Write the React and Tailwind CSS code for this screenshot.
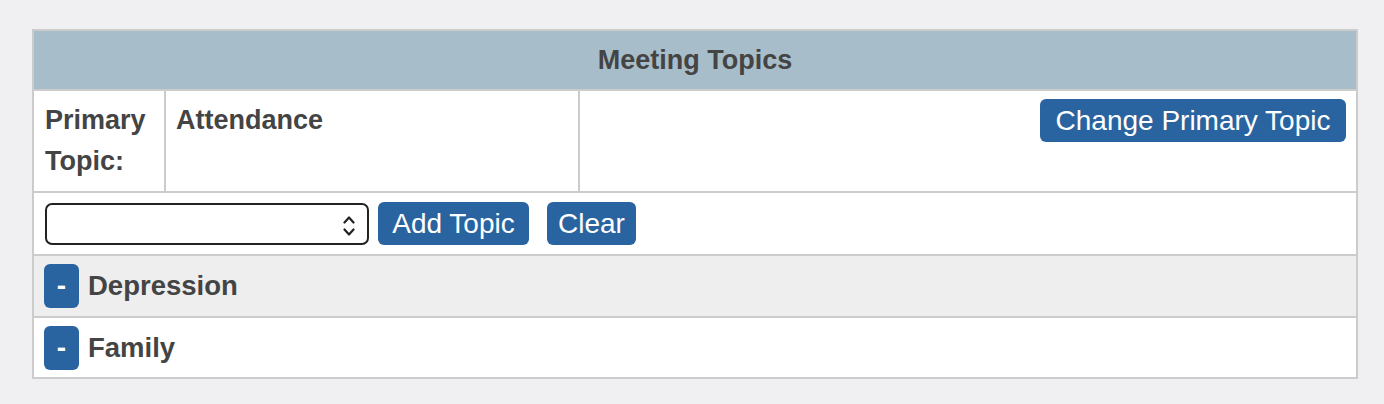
import React, { useState } from "react";

const btn =
  "h-[43px] px-[11px] rounded-[6px] bg-[#2a64a0] text-white text-[28px] leading-none font-['Liberation_Sans',Arial,sans-serif]";

const TopicRow = ({ name, shaded, last, onRemove }) => (
  <div
    className={`flex items-center ${last ? "h-[61px]" : "h-[62px]"} px-[10px] border-t-2 border-[#cccccc] ${
      shaded ? "bg-[#eeeeee]" : "bg-white"
    }`}
  >
    <button
      onClick={onRemove}
      className="w-[35px] h-[44px] rounded-[6px] bg-[#2a64a0] text-white text-[28px] font-bold leading-none"
    >
      -
    </button>
    <span className="ml-[9px] text-[27.5px] font-bold text-[#444444]">{name}</span>
  </div>
);

const App = () => {
  const [topics, setTopics] = useState(["Depression", "Family"]);

  return (
    <div className="min-h-screen w-full bg-[#f0f0f2] pt-[29px] pl-[32px] font-['Liberation_Sans',Arial,sans-serif]">
      <div className="w-[1326px] border-2 border-[#cccccc] bg-white">
        {/* Header */}
        <div className="h-[58px] bg-[#a8bdca] flex items-center justify-center">
          <h2 className="text-[27px] font-bold text-[#444444]">Meeting Topics</h2>
        </div>

        {/* Primary topic */}
        <div className="grid grid-cols-[130px_2px_412px_2px_1fr] h-[102px] border-t-2 border-[#cccccc]">
          <div className="pl-[11px] pt-[9px] text-[27px] font-bold text-[#444444] leading-[41px]">
            Primary
            <br />
            Topic:
          </div>
          <div className="bg-[#cccccc]" />
          <div className="pl-[10px] pt-[9px] text-[27px] font-bold text-[#444444] leading-[41px]">
            Attendance
          </div>
          <div className="bg-[#cccccc]" />
          <div className="flex justify-end items-start pt-[8px] pr-[10px]">
            <button className={`${btn} w-[306px]`}>Change Primary Topic</button>
          </div>
        </div>

        {/* Add topic */}
        <div className="flex items-center h-[63px] px-[11px] border-t-2 border-[#cccccc]">
          <div className="relative w-[324px] h-[42px] rounded-[7px] border-2 border-[#222222] bg-white">
            <svg
              className="absolute right-[12px] top-[9px]"
              width="12"
              height="24"
              viewBox="0 0 12 24"
              fill="none"
              stroke="#222222"
              strokeWidth="2.2"
              strokeLinecap="round"
              strokeLinejoin="round"
            >
              <path d="M1.5 8.5 L6 3.5 L10.5 8.5" />
              <path d="M1.5 15.5 L6 20.5 L10.5 15.5" />
            </svg>
          </div>
          <button className={`${btn} ml-[9px] w-[151px]`}>Add Topic</button>
          <button className={`${btn} ml-[18px] w-[89px]`}>Clear</button>
        </div>

        {topics.map((t, i) => (
          <TopicRow
            key={t}
            name={t}
            shaded={i % 2 === 0}
            last={i === topics.length - 1}
            onRemove={() => setTopics(topics.filter((x) => x !== t))}
          />
        ))}
      </div>
    </div>
  );
};

export default App;
